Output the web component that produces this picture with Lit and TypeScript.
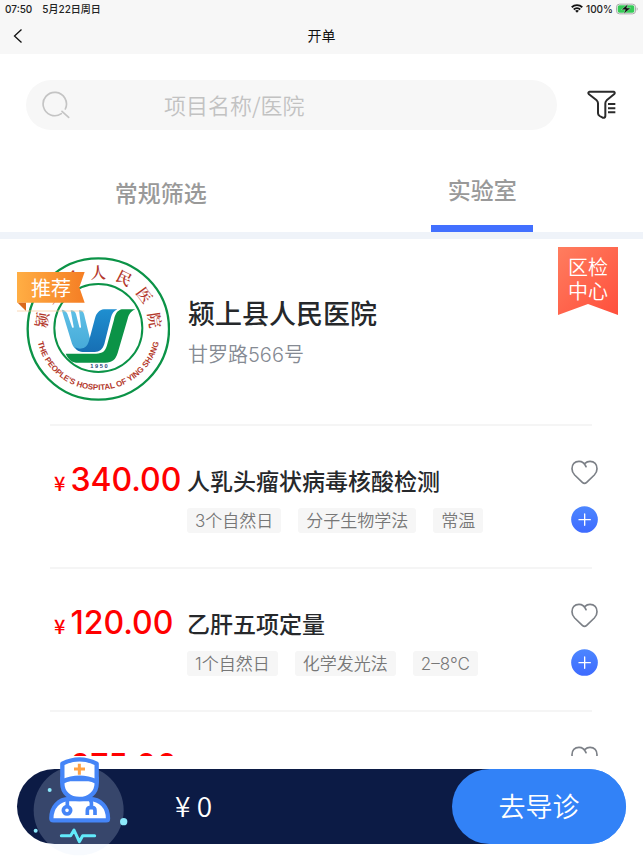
import { LitElement, html, css, svg } from "lit";
import { customElement, property, state } from "lit/decorators.js";
import { classMap } from "lit/directives/class-map.js";

interface TestItem {
  price: string;
  name: string;
  tags: string[];
}

const ITEMS: TestItem[] = [
  { price: "340.00", name: "人乳头瘤状病毒核酸检测", tags: ["3个自然日", "分子生物学法", "常温"] },
  { price: "120.00", name: "乙肝五项定量", tags: ["1个自然日", "化学发光法", "2–8℃"] },
  { price: "275.00", name: "", tags: [] },
];

const base = css`
  * {
    box-sizing: border-box;
  }
  button {
    border: 0;
    padding: 0;
    margin: 0;
    background: none;
    font: inherit;
    color: inherit;
    cursor: pointer;
  }
  svg {
    display: block;
  }
`;

@customElement("status-bar")
export class StatusBar extends LitElement {
  static styles = [
    base,
    css`
      :host {
        display: flex;
        align-items: center;
        justify-content: space-between;
        height: 17px;
        padding: 0 5px;
        font: 500 10px/16px Inter, "Noto Sans CJK SC", sans-serif;
        color: #222;
      }
      .group {
        display: flex;
        align-items: center;
      }
      .left {
        gap: 10px;
      }
      .right {
        gap: 3px;
      }
    `,
  ];

  render() {
    return html`
      <div class="group left"><span>07:50</span><span>5月22日周日</span></div>
      <div class="group right">
        <svg width="12" height="9" viewBox="0 0 24 18" fill="none" stroke="#111" stroke-width="3.6">
          <path d="M1.5 6.5a15 15 0 0 1 21 0M5.5 11a9.4 9.4 0 0 1 13 0" />
          <path d="M8.2 13.6a5.6 5.6 0 0 1 7.6 0L12 17.5z" fill="#111" stroke="none" />
        </svg>
        <span>100%</span>
        <svg width="22" height="12" viewBox="0 0 66 36">
          <rect x="1.5" y="3.5" width="57" height="29" rx="9" fill="#fff" stroke="#a9a9a9" stroke-width="3" />
          <rect x="5" y="7" width="50" height="22" rx="5" fill="#35cb57" />
          <path d="M62 13c4 2 4 8 0 10z" fill="#a9a9a9" />
          <path d="M36 3L16 20h12l-5 13 21-18H32z" fill="#111" stroke="#fff" stroke-width="1" />
        </svg>
      </div>
    `;
  }
}

@customElement("hospital-logo")
export class HospitalLogo extends LitElement {
  static styles = [
    base,
    css`
      :host {
        display: block;
        position: relative;
        flex: none;
        width: 144px;
        height: 144px;
      }
      .cn {
        font: 600 46px "Noto Serif CJK SC", "Noto Sans CJK SC", serif;
        fill: #b3372b;
        text-anchor: middle;
      }
      .en {
        font: bold 24px "Liberation Sans", sans-serif;
        fill: #b3372b;
        text-anchor: middle;
      }
      .year {
        font: bold 17px "Liberation Sans", sans-serif;
        fill: #1f3f78;
        text-anchor: middle;
      }
      .ribbon {
        position: absolute;
        left: -9px;
        top: 15px;
      }
      .label {
        position: absolute;
        left: 5px;
        top: 15px;
        font: 400 20px/31px "Noto Sans CJK SC", sans-serif;
        color: #fff;
      }
    `,
  ];

  render() {
    return html`
      <svg width="144" height="144" viewBox="48 36 432 432" role="img" aria-label="颍上县人民医院">
        <defs>
          <path id="ring" d="M78 248A187 187 0 0 0 452 248" />
          <linearGradient id="hand" x1="0" y1="0" x2="0" y2="1">
            <stop offset="0" stop-color="#5fc0e6" />
            <stop offset="1" stop-color="#45a9d8" />
          </linearGradient>
          <linearGradient id="blue" x1="0" y1="0" x2="0" y2="1">
            <stop offset="0" stop-color="#1f8fd0" />
            <stop offset="1" stop-color="#176fb4" />
          </linearGradient>
        </defs>
        <circle cx="265" cy="252" r="212" fill="#fff" stroke="#0b9347" stroke-width="7" />
        <circle cx="265" cy="249" r="132" fill="none" stroke="#0b9347" stroke-width="6" />
        ${["颍", "上", "县", "人", "民", "医", "院"].map(
          (c, i) => svg`<text class="cn" x="265" y="98" transform="rotate(${(i - 3) * 27} 265 252)">${c}</text>`
        )}
        <text class="en"><textPath href="#ring" startOffset="50%">THE PEOPLE'S HOSPITAL OF YING SHANG</textPath></text>
        <path d="M155 194c8 0 14 5 17 12l14 40c1 4 6 3 5-1l-9-49c8-1 14 4 16 11l10 39c1 4 6 3 5-1l-6-49c8-1 13 4 15 11l17 70 18 43h-30c-22 0-34-7-41-24z" fill="url(#hand)" />
        <path d="M282 193h40c-11 5-16 13-19 24l-20 80c-5 16-14 24-30 24h-35c-11 0-18-5-23-14 8 4 15 5 22 3 12-3 17-12 20-23l18-67c4-15 12-25 27-27z" fill="url(#blue)" />
        <path d="M335 193h41c-14 6-19 15-23 28l-30 103c-6 20-16 29-37 29h-82c-17 0-28-7-37-27h91c20 0 28-7 33-25l21-77c4-17 9-27 23-31z" fill="#0b9347" />
        <text class="year" x="267" y="370">1 9 5 0</text>
      </svg>
      <svg class="ribbon" width="68" height="40" viewBox="0 0 204 120">
        <defs>
          <linearGradient id="rib">
            <stop offset="0" stop-color="#ffae44" />
            <stop offset="1" stop-color="#f57e24" />
          </linearGradient>
        </defs>
        <path d="M0 0h203l-16 46 16 46H0z" fill="url(#rib)" />
        <path d="M2 92h25v25z" fill="#d9691c" />
        <path d="M0 117h202" stroke="#f9c493" stroke-width="2" />
      </svg>
      <span class="label">推荐</span>
    `;
  }
}

@customElement("test-row")
export class TestRow extends LitElement {
  @property({ attribute: false }) item!: TestItem;
  @state() private liked = false;

  static styles = [
    base,
    css`
      :host {
        display: grid;
        grid-template-columns: 133px 1fr 27px;
        height: 143px;
        padding: 36px 0 0 4px;
        margin: 0 45px 0 50px;
        position: relative;
      }
      .line {
        position: absolute;
        left: 0;
        right: 6px;
        top: 0;
        height: 2px;
        background: #f5f5f5;
      }
      .price {
        display: flex;
        align-items: baseline;
        gap: 5px;
        height: 40px;
        color: #f00;
        font: 500 32px/40px Inter, sans-serif;
      }
      .unit {
        font: 500 20px/40px "Noto Sans CJK SC", sans-serif;
      }
      .name {
        margin: 4px 0 12px;
        font: 500 23px/32px "Noto Sans CJK SC", sans-serif;
        color: #26282b;
        white-space: nowrap;
      }
      .tags {
        display: flex;
        gap: 17px;
        margin: 0;
        padding: 0;
        list-style: none;
      }
      .tag {
        padding: 1px 8px 0;
        border-radius: 3px;
        background: #f6f6f6;
        color: #777;
        font: 350 17px/24px Inter, "Noto Sans CJK SC", sans-serif;
        white-space: nowrap;
      }
      .actions {
        display: flex;
        flex-direction: column;
        align-items: center;
        gap: 21px;
      }
      .like path {
        fill: none;
        stroke: #7c8087;
      }
      .liked path {
        fill: #f00;
        stroke: #f00;
      }
    `,
  ];

  render() {
    const { price, name, tags } = this.item;
    return html`
      <div class="line"></div>
      <div class="price"><span class="unit">¥</span><span>${price}</span></div>
      <div>
        <h3 class="name">${name}</h3>
        <ul class="tags">
          ${tags.map((t) => html`<li class="tag">${t}</li>`)}
        </ul>
      </div>
      <div class="actions">
        <button
          class=${classMap({ like: true, liked: this.liked })}
          aria-label="收藏"
          @click=${() => (this.liked = !this.liked)}
        >
          <svg width="27" height="25" viewBox="0 0 81 75" stroke-width="5" stroke-linecap="round" stroke-linejoin="round">
            <path d="M45 20C41 10 33 4 24 4 11 4 3 13 3 26c0 8 3 14 8 19l23 22c4 4 9 4 13 0l23-22c5-5 8-11 8-19C78 13 70 4 57 4c-6 0-11 2-15 6" />
          </svg>
        </button>
        <button aria-label="添加" @click=${() => this.dispatchEvent(new CustomEvent("add", { detail: price }))}>
          <svg width="27" height="27" viewBox="0 0 81 81">
            <defs>
              <linearGradient id="g" x1="0" y1="0" x2="0" y2="1">
                <stop offset="0" stop-color="#4c86ff" />
                <stop offset="1" stop-color="#3e6bff" />
              </linearGradient>
            </defs>
            <circle cx="40.5" cy="40.5" r="40" fill="url(#g)" />
            <path d="M24 41h34M41 24v34" stroke="#fff" stroke-width="4" stroke-linecap="round" />
          </svg>
        </button>
      </div>
    `;
  }
}

@customElement("cart-bar")
export class CartBar extends LitElement {
  @property({ type: Number }) total = 0;

  static styles = [
    base,
    css`
      :host {
        display: block;
        flex: none;
        padding: 13px 17px 14px;
        background: #fff;
        font-family: "Noto Sans CJK SC", sans-serif;
      }
      .bar {
        position: relative;
        display: flex;
        align-items: center;
        height: 75px;
        padding-left: 158px;
        border-radius: 38px;
        background: linear-gradient(to right, #0c1b45 85%, #3282f7 85%);
      }
      .total {
        flex: 1;
        padding-bottom: 4px;
        font-size: 28px;
        line-height: 40px;
        font-weight: 350;
        color: #fff;
      }
      .go {
        width: 174px;
        height: 75px;
        padding-bottom: 2px;
        border-radius: 38px;
        background: #3282f7;
        color: #fff;
        font-size: 27px;
        font-weight: 350;
      }
      .doctor {
        position: absolute;
        left: 13px;
        top: -14px;
      }
    `,
  ];

  render() {
    return html`
      <div class="bar">
        <svg class="doctor" width="100" height="102" viewBox="90 60 300 306" fill="none">
          <circle cx="236" cy="226" r="135" fill="#d8e8fa" fill-opacity=".21" />
          <path d="M154 250c0-34 22-58 54-58h60c34 0 56 24 56 58v1q0 5-5 5H160q-6 0-6-6z" fill="#fff" stroke="#4585f7" stroke-width="13" />
          <path d="M187 132v14c0 26 21 46 51 46s52-20 52-46v-14z" fill="#fff" stroke="#4585f7" stroke-width="13" />
          <path d="M187 86q51-26 103 0v54q-52-24-103 0z" fill="#fff" stroke="#4585f7" stroke-width="13" stroke-linejoin="round" />
          <path d="M238 86v33M222 102h33" stroke="#ffa143" stroke-width="9" />
          <path d="M202 192v22M270 192q6 8 4 24" stroke="#4585f7" stroke-width="11" />
          <circle cx="201" cy="226" r="11" fill="#fff" stroke="#4585f7" stroke-width="11" />
          <path d="M262 240v-13q0-9 8-9h7q8 0 8 9v13" stroke="#4585f7" stroke-width="11" />
          <path d="M184 302h28l10-17 16 35 10-18h36" stroke="#62eafb" stroke-width="9" stroke-linecap="round" stroke-linejoin="round" />
          <circle cx="371" cy="260" r="11" fill="#8ce9fb" />
          <circle cx="149" cy="165" r="6" fill="#8ce9fb" />
          <circle cx="107" cy="287" r="6" fill="#8ce9fb" />
        </svg>
        <span class="total">¥ ${this.total}</span>
        <button class="go">去导诊</button>
      </div>
    `;
  }
}

@customElement("app-root")
export class AppRoot extends LitElement {
  @state() private tab = 1;
  @state() private total = 0;

  static styles = [
    base,
    css`
      :host {
        display: flex;
        flex-direction: column;
        height: 100vh;
        overflow: hidden;
        background: #fff;
        font-family: "Noto Sans CJK SC", sans-serif;
      }
      .top {
        flex: none;
        padding-bottom: 2px;
        background: #f7f7f7;
      }
      .nav {
        display: grid;
        grid-template-columns: 36px 1fr 36px;
        align-items: center;
        height: 35px;
      }
      .back {
        padding: 2px 0 0 13px;
      }
      .title {
        margin: 0;
        text-align: center;
        font-size: 14px;
        line-height: 20px;
        font-weight: 400;
        color: #111;
      }
      .search {
        display: flex;
        align-items: center;
        gap: 30px;
        flex: none;
        padding: 26px 26px 0;
      }
      .box {
        display: flex;
        align-items: center;
        flex: 1;
        height: 50px;
        padding: 0 16px;
        gap: 94px;
        border-radius: 25px;
        background: #f7f7f7;
      }
      .box svg {
        flex: none;
      }
      .input {
        flex: 1;
        min-width: 0;
        padding: 0 0 2px;
        border: 0;
        outline: 0;
        background: none;
        font: 350 22px/32px "Noto Sans CJK SC", sans-serif;
        color: #333;
      }
      .input::placeholder {
        color: #c2c2c2;
        opacity: 1;
      }
      .tabs {
        display: grid;
        grid-template-columns: 1fr 1fr;
        align-items: end;
        justify-items: center;
        flex: none;
        height: 102px;
      }
      .tab {
        display: flex;
        flex-direction: column;
        align-items: center;
        width: 102px;
        padding-bottom: 24px;
        font-size: 23px;
        line-height: 32px;
        font-weight: 500;
        color: #999;
        white-space: nowrap;
      }
      .active {
        padding-bottom: 0;
      }
      .active::after {
        content: "";
        width: 100%;
        height: 7px;
        margin-top: 20px;
        background: #4270ff;
      }
      .list {
        flex: 1;
        min-height: 0;
        overflow: hidden;
        border-top: 7px solid #eff3f9;
      }
      .hospital {
        display: flex;
        align-items: flex-start;
        padding: 8px 25px 23px 26px;
      }
      .logo {
        margin-top: 10px;
      }
      .info {
        flex: 1;
        padding: 48px 0 0 18px;
      }
      .name {
        margin: 0 0 10px;
        font-size: 27px;
        line-height: 36px;
        font-weight: 500;
        color: #26282b;
      }
      .addr {
        margin: 0;
        font: 350 20px/28px Inter, "Noto Sans CJK SC", sans-serif;
        color: #858a93;
      }
      .badge {
        width: 60px;
        height: 68px;
        padding: 8px 10px;
        background: linear-gradient(135deg, #ff7d5f, #ff4f3c);
        clip-path: polygon(0 0, 100% 0, 100% 100%, 50% 84%, 0 100%);
        color: #fff;
        font-size: 20px;
        line-height: 24px;
        font-weight: 350;
      }
    `,
  ];

  render() {
    return html`
      <header class="top">
        <status-bar></status-bar>
        <nav class="nav">
          <button class="back" aria-label="返回">
            <svg width="10" height="16" viewBox="0 0 10 16" fill="none" stroke="#111" stroke-width="1.3">
              <path d="M8.5 1.5L1.5 8l7 6.5" />
            </svg>
          </button>
          <h1 class="title">开单</h1>
        </nav>
      </header>
      <div class="search">
        <label class="box">
          <svg width="28" height="28" viewBox="0 0 84 84" fill="none" stroke="#c4c4c4" stroke-width="5" stroke-linecap="round">
            <path d="M58 68A35 35 0 1 1 70 54M60 61l20 18" />
          </svg>
          <input class="input" type="text" aria-label="搜索" placeholder="项目名称/医院" />
        </label>
        <button aria-label="筛选">
          <svg width="30" height="30" viewBox="796 270 90 90" fill="none" stroke="#2b2b2b" stroke-width="6" stroke-linejoin="round">
            <path d="M804 275h72q6 3 1 8l-22 18q-4 4-4 9v38q-1 7-8 5l-9-5q-5-3-5-8v-30q0-5-4-9l-23-18q-5-5 2-8z" />
            <path d="M859 312h22M859 325h22M859 337h22" />
          </svg>
        </button>
      </div>
      <div class="tabs" role="tablist">
        ${["常规筛选", "实验室"].map(
          (t, i) => html`<button
            role="tab"
            aria-selected=${this.tab === i ? "true" : "false"}
            class=${classMap({ tab: true, active: this.tab === i })}
            @click=${() => (this.tab = i)}
          >
            ${t}
          </button>`
        )}
      </div>
      <main class="list">
        <section class="hospital">
          <hospital-logo class="logo"></hospital-logo>
          <div class="info">
            <h2 class="name">颍上县人民医院</h2>
            <p class="addr">甘罗路566号</p>
          </div>
          <div class="badge">区检<br />中心</div>
        </section>
        ${ITEMS.map(
          (item) => html`<test-row
            .item=${item}
            @add=${(e: CustomEvent<string>) => (this.total += Number(e.detail))}
          ></test-row>`
        )}
      </main>
      <cart-bar .total=${this.total}></cart-bar>
    `;
  }
}
